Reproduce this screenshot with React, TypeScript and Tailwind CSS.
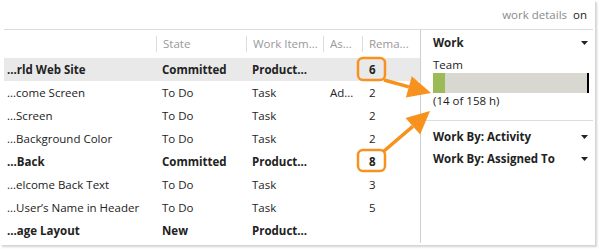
import React from "react";

type Row = { title: string; state: string; type: string; assigned: string; rem: string; bold?: boolean; hl?: boolean };

const rows: Row[] = [
  { title: "...rld Web Site", state: "Committed", type: "Product...", assigned: "", rem: "6", bold: true, hl: true },
  { title: "...come Screen", state: "To Do", type: "Task", assigned: "Ad...", rem: "2" },
  { title: "...Screen", state: "To Do", type: "Task", assigned: "", rem: "2" },
  { title: "...Background Color", state: "To Do", type: "Task", assigned: "", rem: "2" },
  { title: "...Back", state: "Committed", type: "Product...", assigned: "", rem: "8", bold: true },
  { title: "...elcome Back Text", state: "To Do", type: "Task", assigned: "", rem: "3" },
  { title: "...User\u2019s Name in Header", state: "To Do", type: "Task", assigned: "", rem: "5" },
  { title: "...age Layout", state: "New", type: "Product...", assigned: "", rem: "", bold: true },
];

const Caret = () => (
  <svg width="7" height="4" viewBox="0 0 7 4" className="block">
    <path d="M0 0 L7 0 L3.5 4 Z" fill="#222" />
  </svg>
);

function arrowHead(x1: number, y1: number, x2: number, y2: number, len = 23, half = 11) {
  const dx = x2 - x1;
  const dy = y2 - y1;
  const d = Math.hypot(dx, dy);
  const ux = dx / d;
  const uy = dy / d;
  const bx = x2 - ux * len;
  const by = y2 - uy * len;
  const px = -uy * half;
  const py = ux * half;
  return { pts: `${x2},${y2} ${bx + px},${by + py} ${bx - px},${by - py}`, bx, by };
}

export default function App() {
  const a1 = arrowHead(384, 80, 431, 93);
  const a2 = arrowHead(384, 152, 430, 111);
  const orange = "#f7921e";
  return (
    <div
      className="relative w-[600px] h-[251px] bg-white overflow-hidden text-[11.5px] text-[#222]"
      style={{ fontFamily: '"Open Sans", "Noto Sans", sans-serif' }}
    >
      <div className="w-[595px] h-[245px] bg-white shadow-[2px_2px_2px_rgba(0,0,0,0.18)] flex flex-col">
        <div className="h-[29px] flex items-center justify-end pr-[8px] pt-[1px] gap-[6px]">
          <span className="text-[#8a8a8a]">work details</span>
          <span className="text-[#222]">on</span>
        </div>
        <div className="ml-[4px] mr-[2px] border-t border-[#dcdcdc] flex flex-1">
          <div className="w-[416px] flex flex-col">
            <div className="h-[28px] flex items-center text-[#999]">
              <div className="w-[152px]" />
              <div className="w-[90px] h-[16px] border-l border-[#dcdcdc] pl-[6px] flex items-center">State</div>
              <div className="w-[77px] h-[16px] border-l border-[#dcdcdc] pl-[6px] flex items-center whitespace-nowrap overflow-hidden">Work Item...</div>
              <div className="w-[39px] h-[16px] border-l border-[#dcdcdc] pl-[6px] flex items-center">As...</div>
              <div className="w-[58px] h-[16px] border-l border-[#dcdcdc] pl-[6px] flex items-center">Rema...</div>
            </div>
            {rows.map((r, i) => (
              <div
                key={i}
                className={`h-[23px] flex items-center whitespace-nowrap ${r.bold ? "font-bold" : ""} ${r.hl ? "bg-[#e9e9e9]" : ""}`}
              >
                <div className="w-[152px] pl-[3px]">{r.title}</div>
                <div className="w-[90px] pl-[6px]">{r.state}</div>
                <div className="w-[77px] pl-[6px]">{r.type}</div>
                <div className="w-[39px] pl-[7px]">{r.assigned}</div>
                <div className="w-[58px] pl-[7px]">{r.rem}</div>
              </div>
            ))}
          </div>
          <div className="flex-1 border-l border-[#cfcfcf] mb-[2px] flex flex-col">
            <div className="pl-[12px] pr-[5px]">
              <div className="h-[26px] flex items-center justify-between font-bold">
                <span>Work</span>
                <Caret />
              </div>
              <div className="h-[17px] flex items-center">Team</div>
              <div className="relative h-[20px] mr-[-1px] bg-[#d8d8d0]">
                <div className="absolute left-0 top-0 h-full w-[12px] bg-[#9bbb59]" />
                <div className="absolute right-0 top-0 h-full w-[2px] bg-black" />
              </div>
              <div className="h-[16px] flex items-center">(14 of 158 h)</div>
            </div>
            <div className="mt-[11px] border-t border-[#dcdcdc] pt-[5px] pl-[12px] pr-[5px] font-bold">
              <div className="h-[22px] flex items-center justify-between">
                <span>Work By: Activity</span>
                <Caret />
              </div>
              <div className="h-[22px] flex items-center justify-between">
                <span>Work By: Assigned To</span>
                <Caret />
              </div>
            </div>
          </div>
        </div>
      </div>
      <svg className="absolute left-0 top-0 pointer-events-none" width="600" height="251">
        <rect x="358" y="58" width="27" height="22" rx="5" fill="none" stroke={orange} strokeWidth="2.5" />
        <rect x="358" y="150" width="27" height="21" rx="5" fill="none" stroke={orange} strokeWidth="2.5" />
        <line x1="384" y1="80" x2={a1.bx} y2={a1.by} stroke={orange} strokeWidth="3.5" />
        <polygon points={a1.pts} fill={orange} />
        <line x1="384" y1="151" x2={a2.bx} y2={a2.by} stroke={orange} strokeWidth="3.5" />
        <polygon points={a2.pts} fill={orange} />
      </svg>
    </div>
  );
}
